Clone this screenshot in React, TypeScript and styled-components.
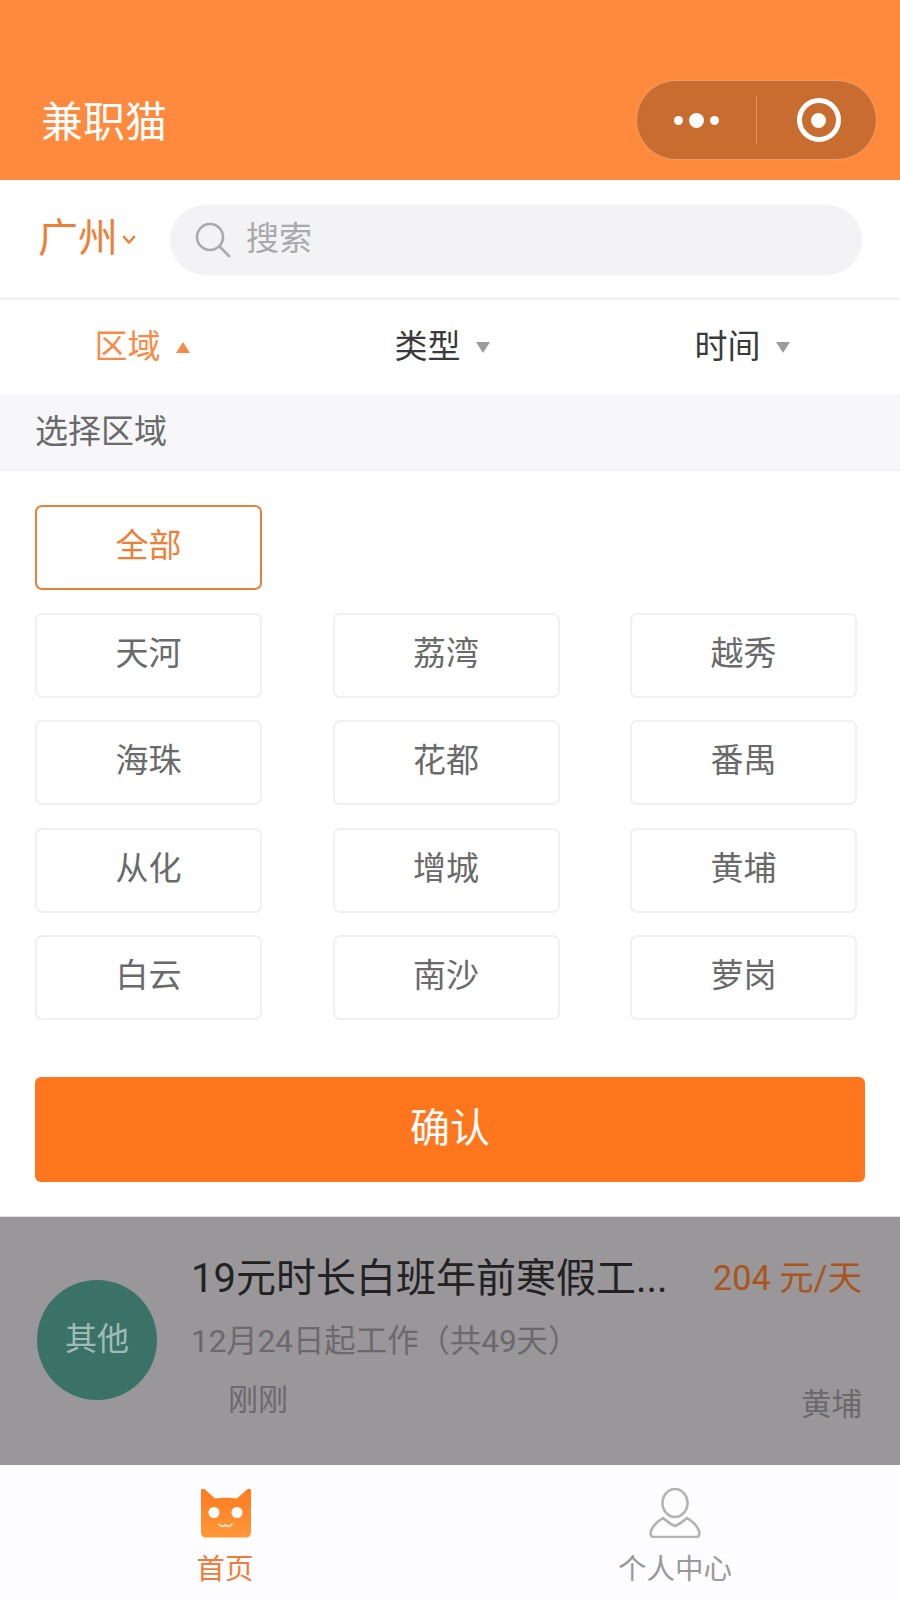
import React from "react";
import styled, { createGlobalStyle } from "styled-components";

const GlobalStyle = createGlobalStyle`
  * {
    box-sizing: border-box;
  }
  html, body {
    margin: 0;
    padding: 0;
    background: #fff;
    font-family: Roboto, "Noto Sans CJK SC", sans-serif;
  }
`;

const Page = styled.div`
  width: 900px;
  height: 1600px;
  display: flex;
  flex-direction: column;
  overflow: hidden;
`;

const Header = styled.header`
  height: 180px;
  flex: none;
  display: flex;
  justify-content: space-between;
  align-items: flex-end;
  padding: 0 23px 20px 41px;
  background: #ff893c;
`;

const AppTitle = styled.h1`
  margin: 0 0 7px;
  font-size: 42px;
  line-height: 60px;
  font-weight: 400;
  color: #fff;
`;

const Capsule = styled.div`
  width: 241px;
  height: 80px;
  display: flex;
  align-items: center;
  border: 1px solid #e3a070;
  border-radius: 40px;
  background: #c96c2f;
`;

const CapsuleSide = styled.div`
  flex: 1;
  display: flex;
  justify-content: center;
  align-items: center;
`;

const CapsuleLine = styled.div`
  width: 1px;
  height: 48px;
  background: #dd9560;
`;

const Dot = styled.span<{ $big?: boolean }>`
  width: ${(props) => (props.$big ? 15 : 9)}px;
  height: ${(props) => (props.$big ? 15 : 9)}px;
  margin: 0 ${(props) => (props.$big ? 6 : 0)}px;
  border-radius: 50%;
  background: #fff;
`;

const Ring = styled.div`
  width: 44px;
  height: 44px;
  margin-left: 4px;
  display: flex;
  justify-content: center;
  align-items: center;
  border: 5px solid #fff;
  border-radius: 50%;
  &::after {
    content: "";
    width: 15px;
    height: 15px;
    border-radius: 50%;
    background: #fff;
  }
`;

const SearchRow = styled.div`
  height: 120px;
  flex: none;
  display: flex;
  align-items: center;
  padding: 3px 38px 0 38px;
  border-bottom: 3px solid #f3f3f5;
`;

const City = styled.div`
  width: 132px;
  flex: none;
  display: flex;
  align-items: center;
  gap: 4px;
  padding-bottom: 11px;
  font-size: 40px;
  color: #ee7f37;
  svg {
    margin-top: 11px;
  }
`;

const SearchBox = styled.div`
  flex: 1;
  height: 70px;
  display: flex;
  align-items: center;
  gap: 15px;
  padding-left: 25px;
  border-radius: 35px;
  background: #f3f2f5;
  font-size: 33px;
  color: #a9a9ad;
`;

const SearchHint = styled.span`
  margin-bottom: 8px;
`;

const Tabs = styled.div`
  height: 95px;
  flex: none;
  display: grid;
  grid-template-columns: repeat(3, 300px);
  align-items: center;
  padding-bottom: 8px;
`;

const Tab = styled.div<{ $active?: boolean }>`
  display: flex;
  justify-content: center;
  align-items: center;
  gap: 15px;
  padding-right: 16px;
  font-size: 33px;
  color: ${(props) => (props.$active ? "#f98a45" : "#3a3a3a")};
`;

const Arrow = styled.span<{ $up?: boolean }>`
  width: 0;
  height: 0;
  margin-top: 8px;
  border-left: 7.5px solid transparent;
  border-right: 7.5px solid transparent;
  ${(props) =>
    props.$up
      ? "border-bottom: 11px solid #f98a45;"
      : "border-top: 11px solid #9c9c9f;"}
`;

const SectionTitle = styled.div`
  height: 76px;
  flex: none;
  display: flex;
  align-items: center;
  padding: 0 0 6px 35px;
  border-bottom: 2px solid #f3f3f5;
  background: #f7f6f9;
  font-size: 33px;
  color: #6a6a6a;
`;

const Panel = styled.div`
  height: 746px;
  flex: none;
  padding: 34px 35px 0;
  border-bottom: 1px solid #e2e2e2;
`;

const AreaGrid = styled.div`
  display: grid;
  grid-template-columns: repeat(3, 227px);
  grid-auto-rows: 85px;
  column-gap: 70.5px;
  row-gap: 22.5px;
`;

const AreaButton = styled.div<{ $selected?: boolean }>`
  display: flex;
  justify-content: center;
  align-items: center;
  padding-bottom: 9px;
  border: ${(props) => (props.$selected ? "2.5px solid #e98039" : "2px solid #f0f0f2")};
  border-radius: 7px;
  font-size: 33px;
  color: ${(props) => (props.$selected ? "#ee7f37" : "#6a6a6a")};
`;

const ConfirmButton = styled.div`
  width: 830px;
  height: 105px;
  margin-top: 57px;
  display: flex;
  justify-content: center;
  align-items: center;
  padding-bottom: 9px;
  border-radius: 6px;
  background: #ff761d;
  font-size: 40px;
  color: #fff;
`;

const JobCard = styled.div`
  height: 248px;
  flex: none;
  display: flex;
  align-items: center;
  gap: 34px;
  padding: 0 38px 0 37px;
  background: #99979a;
`;

const Badge = styled.div`
  width: 120px;
  height: 120px;
  margin-bottom: 2px;
  flex: none;
  display: flex;
  justify-content: center;
  align-items: center;
  padding-bottom: 8px;
  border-radius: 50%;
  background: #3a7267;
  font-size: 32px;
  color: #9fbdb5;
`;

const JobBody = styled.div`
  flex: 1;
  margin-bottom: 10px;
  display: flex;
  flex-direction: column;
`;

const JobRow = styled.div`
  height: 61px;
  display: flex;
  justify-content: space-between;
  align-items: center;
`;

const JobTitle = styled.div`
  font-size: 40px;
  color: #222;
`;

const Price = styled.div`
  font-size: 34.3px;
  color: #a9551b;
`;

const JobDate = styled.div`
  margin-top: 4px;
  font-size: 31.4px;
  color: #6b696c;
`;

const Posted = styled.div`
  margin-left: 37px;
  font-size: 30px;
  color: #6b696c;
`;

const Place = styled.div`
  margin-top: 10px;
  font-size: 30.5px;
  color: #6b696c;
`;

const TabBar = styled.nav`
  flex: 1;
  display: grid;
  grid-template-columns: 1fr 1fr;
  background: #fdfcfe;
`;

const TabBarItem = styled.div<{ $active?: boolean }>`
  display: flex;
  flex-direction: column;
  align-items: center;
  padding-top: 23px;
  font-size: 28.5px;
  line-height: 42px;
  color: ${(props) => (props.$active ? "#f27b3a" : "#999")};
  svg {
    display: block;
    margin-bottom: 11px;
  }
`;

const SearchIcon = () => (
  <svg width="36" height="36" viewBox="0 0 36 36" fill="none" stroke="#aaa" strokeWidth="2.6" strokeLinecap="round">
    <circle cx="15" cy="15" r="13" />
    <path d="M25 25 L34 34" />
  </svg>
);

const ChevronIcon = () => (
  <svg width="14" height="10" viewBox="0 0 14 10" fill="none" stroke="#ee7f37" strokeWidth="2.6" strokeLinecap="round" strokeLinejoin="round">
    <path d="M2 2 L7 7.5 L12 2" />
  </svg>
);

const CatIcon = () => (
  <svg width="52" height="50" viewBox="-1 0 52 50">
    <defs>
      <linearGradient id="catFill" x1="0" y1="0" x2="0" y2="1">
        <stop offset="0" stopColor="#ff7a1e" />
        <stop offset="1" stopColor="#ff983a" />
      </linearGradient>
    </defs>
    <path
      d="M1 3 C1 0.5 3 0 5 1.5 L15 10.5 C22 9.5 30 9.5 37 10.5 L47 1.5 C49 0 51 0.5 51 3 V44 C51 47.5 49 49.5 46 49.5 H6 C3 49.5 1 47.5 1 44 Z"
      fill="url(#catFill)"
    />
    <circle cx="14" cy="24.5" r="5.5" fill="#fff" />
    <circle cx="37" cy="24.5" r="5.5" fill="#fff" />
    <path
      d="M19 36 Q22 40 25.5 37 Q29 40 32 36"
      fill="none"
      stroke="#ffe3c8"
      strokeWidth="1.8"
      strokeLinecap="round"
    />
  </svg>
);

const PersonIcon = () => (
  <svg width="52" height="50" viewBox="0 0 52 50" fill="none" stroke="#b3b3b6" strokeWidth="2.6" strokeLinejoin="round">
    <ellipse cx="26" cy="15" rx="12.5" ry="14" />
    <path d="M14 30 C9 33 4 37 2 43 C1 47 2 49 5 49 H47 C50 49 51 47 50 43 C48 37 43 33 38 30 C34 33 30 37 26 38 C22 37 18 33 14 30 Z" />
  </svg>
);

const areas = [
  ["天河", "荔湾", "越秀"],
  ["海珠", "花都", "番禺"],
  ["从化", "增城", "黄埔"],
  ["白云", "南沙", "萝岗"],
].flat();

export default function App() {
  return (
    <Page>
      <GlobalStyle />
      <Header>
        <AppTitle>兼职猫</AppTitle>
        <Capsule>
          <CapsuleSide>
            <Dot />
            <Dot $big />
            <Dot />
          </CapsuleSide>
          <CapsuleLine />
          <CapsuleSide>
            <Ring />
          </CapsuleSide>
        </Capsule>
      </Header>
      <SearchRow>
        <City>
          广州
          <ChevronIcon />
        </City>
        <SearchBox>
          <SearchIcon />
          <SearchHint>搜索</SearchHint>
        </SearchBox>
      </SearchRow>
      <Tabs>
        <Tab $active>
          区域
          <Arrow $up />
        </Tab>
        <Tab>
          类型
          <Arrow />
        </Tab>
        <Tab>
          时间
          <Arrow />
        </Tab>
      </Tabs>
      <SectionTitle>选择区域</SectionTitle>
      <Panel>
        <AreaGrid>
          <AreaButton $selected>全部</AreaButton>
          <div />
          <div />
          {areas.map((area) => (
            <AreaButton key={area}>{area}</AreaButton>
          ))}
        </AreaGrid>
        <ConfirmButton>确认</ConfirmButton>
      </Panel>
      <JobCard>
        <Badge>其他</Badge>
        <JobBody>
          <JobRow>
            <JobTitle>19元时长白班年前寒假工...</JobTitle>
            <Price>204 元/天</Price>
          </JobRow>
          <JobRow>
            <JobDate>12月24日起工作（共49天）</JobDate>
          </JobRow>
          <JobRow>
            <Posted>刚刚</Posted>
            <Place>黄埔</Place>
          </JobRow>
        </JobBody>
      </JobCard>
      <TabBar>
        <TabBarItem $active>
          <CatIcon />
          首页
        </TabBarItem>
        <TabBarItem>
          <PersonIcon />
          个人中心
        </TabBarItem>
      </TabBar>
    </Page>
  );
}
